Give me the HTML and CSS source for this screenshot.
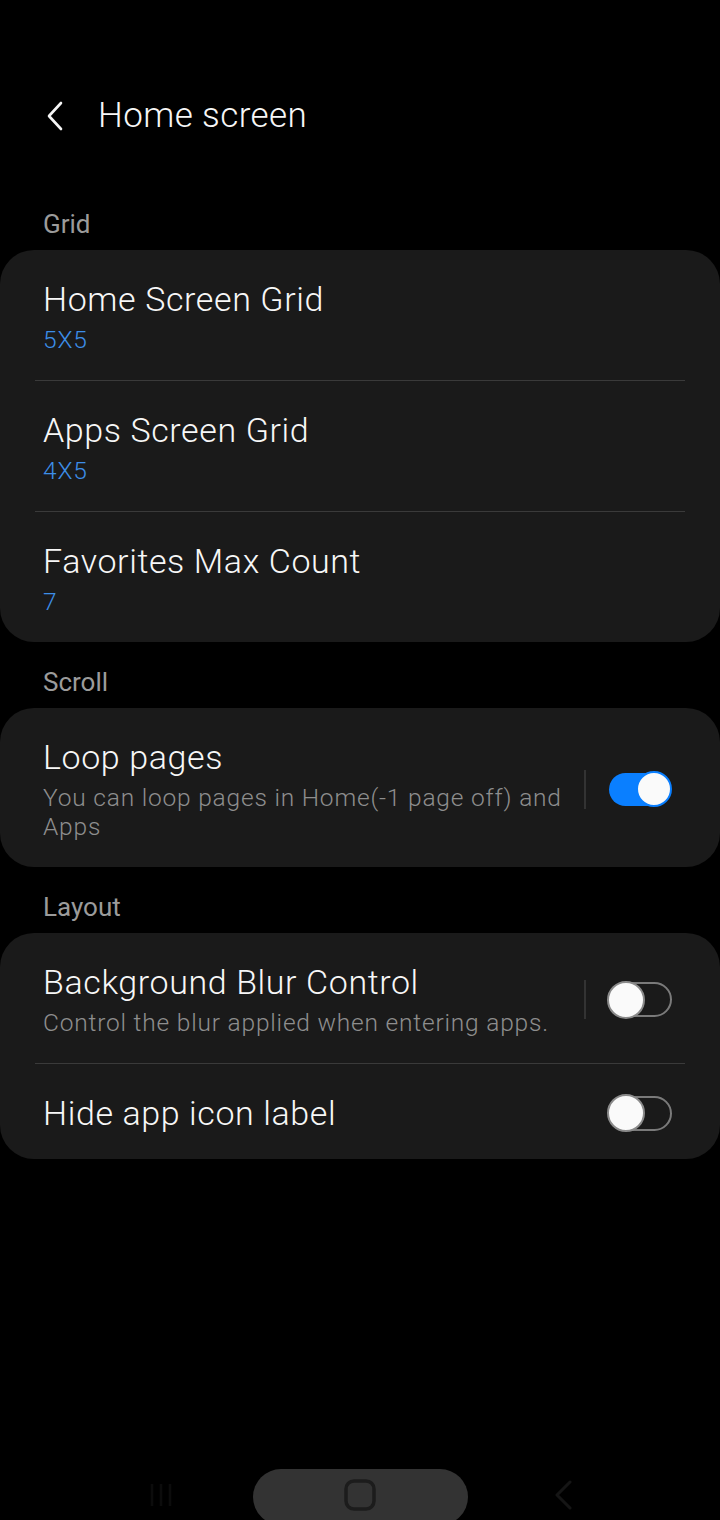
FILE: index.html
```html
<!DOCTYPE html>
<html lang="en">
<head>
  <meta charset="UTF-8" />
  <meta name="viewport" content="width=device-width, initial-scale=1.0"/>
  <title>Home screen</title>
  <link rel="stylesheet" href="styles.css">
</head>
<body>

  <header class="topbar">
    <svg class="back" width="20" height="30" viewBox="0 0 20 30">
      <path d="M16 2 L4 15 L16 28" fill="none" stroke="#f5f5f5" stroke-width="2.6" stroke-linecap="round" stroke-linejoin="round"/>
    </svg>
    <h1>Home screen</h1>
  </header>

  <main>
    <!-- Grid -->
    <h2 class="label">Grid</h2>
    <section class="card">
      <div class="row">
        <div class="text">
          <div class="title">Home Screen Grid</div>
          <div class="sub value">5X5</div>
        </div>
      </div>
      <div class="row">
        <div class="text">
          <div class="title">Apps Screen Grid</div>
          <div class="sub value">4X5</div>
        </div>
      </div>
      <div class="row">
        <div class="text">
          <div class="title">Favorites Max Count</div>
          <div class="sub value">7</div>
        </div>
      </div>
    </section>

    <!-- Scroll -->
    <h2 class="label">Scroll</h2>
    <section class="card">
      <div class="row">
        <div class="text">
          <div class="title">Loop pages</div>
          <div class="sub">You can loop pages in Home(-1 page off) and Apps</div>
        </div>
        <span class="vline"></span>
        <span class="switch on"><span class="track"></span><span class="knob"></span></span>
      </div>
    </section>

    <!-- Layout -->
    <h2 class="label">Layout</h2>
    <section class="card">
      <div class="row">
        <div class="text">
          <div class="title">Background Blur Control</div>
          <div class="sub">Control the blur applied when entering apps.</div>
        </div>
        <span class="vline"></span>
        <span class="switch"><span class="track"></span><span class="knob"></span></span>
      </div>
      <div class="row">
        <div class="text">
          <div class="title">Hide app icon label</div>
        </div>
        <span class="switch"><span class="track"></span><span class="knob"></span></span>
      </div>
    </section>
  </main>

  <nav class="navbar">
    <svg class="nav-recent" width="24" height="28" viewBox="0 0 24 28">
      <path d="M3 3v22M12 3v22M21 3v22" stroke="#0c0c0c" stroke-width="2.5" fill="none"/>
    </svg>
    <div class="nav-home">
      <svg width="32" height="32" viewBox="0 0 32 32">
        <rect x="2" y="2" width="28" height="28" rx="8" fill="none" stroke="#1c1c1c" stroke-width="3.5"/>
      </svg>
    </div>
    <svg class="nav-back" width="18" height="30" viewBox="0 0 18 30">
      <path d="M16 2 L3 15 L16 28" fill="none" stroke="#151515" stroke-width="3" stroke-linecap="round" stroke-linejoin="round"/>
    </svg>
  </nav>

</body>
</html>
```

FILE: styles.css
```css
* { box-sizing: border-box; }
html, body { margin: 0; background: #000; }
body { font-family: Roboto, "Noto Sans", sans-serif; color: #f7f7f7; min-height: 1520px; display: flex; flex-direction: column; overflow: hidden; }

.topbar { display: flex; align-items: center; height: 52px; margin-top: 90px; padding-left: 45px; }
.topbar .back { margin-right: 33px; }
.topbar h1 { margin: 0; font-size: 35px; font-weight: 300; line-height: 52px; letter-spacing: 0.4px; }

.label { margin: 24px 0 10px; padding-left: 43px; font-size: 26px; font-weight: 400; line-height: 32px; color: #9b9b9b; }
.topbar + main .label:first-child { margin-top: 66px; }

.card { background: #1a1a1a; border-radius: 34px; }
.row { display: flex; align-items: center; padding: 29px 48px 26px 43px; position: relative; }
.row + .row { border-top: 1px solid transparent; }
.row + .row::before { content: ""; position: absolute; left: 35px; right: 35px; top: -1px; height: 1px; background: #3a3a3a; }

.text { flex: 1; min-width: 0; }
.title { font-size: 34px; font-weight: 300; line-height: 40px; color: #f7f7f7; letter-spacing: 0.6px; }
.sub { margin-top: 6px; font-size: 24.5px; font-weight: 300; line-height: 29px; color: #8e8e8e; letter-spacing: 0.8px; }
.sub.value { color: #3d8ee8; }

.vline { width: 2px; height: 39px; background: #333; margin-left: 16px; }

.switch { position: relative; width: 65px; height: 38px; margin-left: 21px; flex: none; }
.switch .track { position: absolute; left: 5px; right: 0; top: 1.5px; height: 35px; border: 2px solid #7a7a7a; border-radius: 18px; }
.switch .knob { position: absolute; left: 0; top: 0; width: 38px; height: 38px; border-radius: 50%; background: #fafafa; border: 2px solid #8a8a8a; }
.switch.on .track { left: 2px; right: 4px; top: 2.5px; height: 33px; border: none; background: #0a7fff; }
.switch.on .knob { left: auto; right: 0; top: 1px; width: 36px; height: 36px; border-color: #0a7fff; }

.navbar { margin-top: auto; height: 51px; display: flex; align-items: flex-start; justify-content: center; overflow: hidden; }
.nav-recent { margin-top: 12px; }
.nav-home { width: 215px; height: 56px; margin: 0 86px 0 80px; border-radius: 28px; background: #333; display: flex; justify-content: center; padding-top: 10px; }
.nav-back { margin-top: 11px; }
```
